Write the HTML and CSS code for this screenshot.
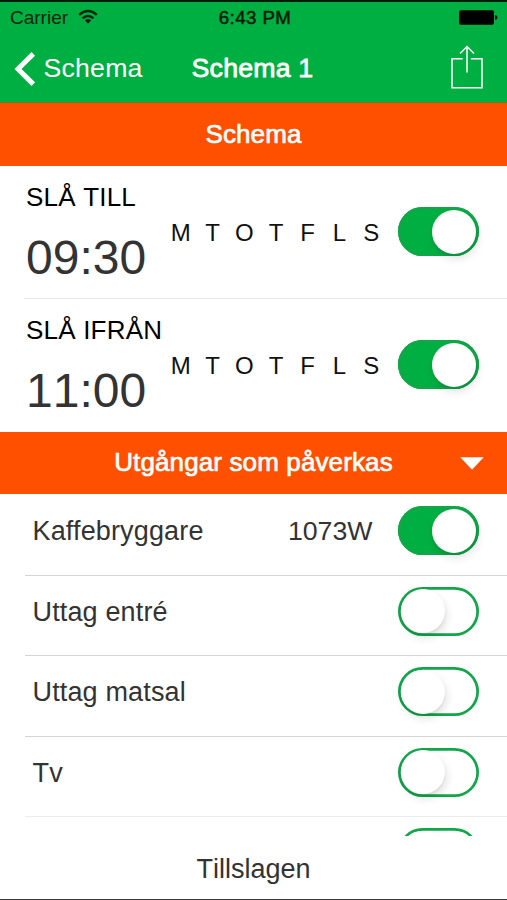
FILE: index.html
```html
<!DOCTYPE html>
<html lang="sv">
<head>
<meta charset="utf-8">
<title>Schema 1</title>
<link rel="stylesheet" href="styles.css">
</head>
<body>
<div class="app">
  <header class="top">
    <div class="status">
      <span class="carrier">Carrier
        <svg class="wifi" width="20" height="16" viewBox="0 0 20 16" fill="none" stroke="#04240e" stroke-width="2.4"><path d="M1.2 5.8Q10 -1.8 18.8 5.8"/><path d="M4.5 9.3Q10 4.6 15.5 9.3"/><path d="M6.8 11.2Q10 8.8 13.2 11.2L10 14.8Z" fill="#04240e" stroke="none"/></svg>
      </span>
      <span class="clock">6:43 PM</span>
      <svg class="battery" width="39" height="15" viewBox="0 0 39 15"><rect x="0" y="0.3" width="35" height="14.4" rx="2"/><path d="M36 5Q38.4 5.2 38.4 7.5T36 10Z"/></svg>
    </div>
    <nav class="nav">
      <a class="back"><svg width="22" height="34" viewBox="0 0 22 34" fill="none" stroke="#fff" stroke-width="5"><path d="M19.3 1.9L4 17L19.3 32.1"/></svg>Schema</a>
      <h1 class="title">Schema 1</h1>
      <svg class="share" width="32" height="44" viewBox="0 0 32 44" fill="none" stroke="#fff" stroke-width="1.5"><path d="M11.7 13.8H1V42.8H31V13.8H19.9"/><path d="M16 27.5V1.8M9 8.5L16 1.5L23 8.5"/></svg>
    </nav>
  </header>
  <h2 class="band">Schema</h2>
  <section class="times">
    <div class="time-row">
      <div class="when"><div class="label">SLÅ TILL</div><div class="hour">09:30</div></div>
      <div class="days"><span>M</span><span>T</span><span>O</span><span>T</span><span>F</span><span>L</span><span>S</span></div>
      <div class="switch on"><i></i></div>
    </div>
    <div class="time-row">
      <div class="when"><div class="label">SLÅ IFRÅN</div><div class="hour">11:00</div></div>
      <div class="days"><span>M</span><span>T</span><span>O</span><span>T</span><span>F</span><span>L</span><span>S</span></div>
      <div class="switch on"><i></i></div>
    </div>
  </section>
  <h2 class="band">Utgångar som påverkas<svg class="caret" width="24" height="13" viewBox="0 0 24 13"><path d="M0.3 0.3H23.7L12 12.7Z" fill="#fff"/></svg></h2>
  <section class="outlets">
    <div class="outlet"><span class="name">Kaffebryggare</span><span class="watt">1073W</span><div class="switch on"><i></i></div></div>
    <div class="outlet"><span class="name">Uttag entré</span><div class="switch"><i></i></div></div>
    <div class="outlet"><span class="name">Uttag matsal</span><div class="switch"><i></i></div></div>
    <div class="outlet last"><span class="name">Tv</span><div class="switch"><i></i></div></div>
    <div class="outlet"><span class="name"></span><div class="switch"><i></i></div></div>
  </section>
  <footer class="footer">Tillslagen</footer>
</div>
</body>
</html>
```
FILE: styles.css
```css
* { box-sizing: border-box; }
body { margin: 0; background: #fff; font-family: "Liberation Sans", Arial, sans-serif; font-kerning: none; }
.app { width: 507px; height: 900px; overflow: hidden; display: flex; flex-direction: column; border-bottom: 1px solid #3c3c3c; }
.app > * { flex-shrink: 0; }
svg { display: block; flex: none; }

.top { height: 103px; background: #00af41; border-top: 2px solid #001b08; border-bottom: 1px solid #667d25; }
.status { height: 32px; padding: 0 9px 0 10px; display: grid; grid-template-columns: 1fr auto 1fr; align-items: center; font-size: 19px; line-height: 32px; color: #04240e; }
.carrier { display: flex; align-items: center; gap: 10px; }
.wifi { margin-top: -3px; }
.clock { margin-right: -2px; font-size: 18.6px; letter-spacing: 0.45px; color: #001b08; -webkit-text-stroke: 0.5px #001b08; }
.battery { justify-self: end; margin-top: -1px; }
.nav { height: 68px; padding: 0 24px 0 14px; display: grid; grid-template-columns: 1fr auto 1fr; align-items: center; color: #fff; font-size: 26.7px; line-height: 69px; }
.back { display: flex; align-items: center; gap: 7.5px; letter-spacing: 0.2px; }
.title { margin: 0 -4px 0 4px; font: inherit; letter-spacing: 0.2px; -webkit-text-stroke: 0.8px #fff; }
.share { justify-self: end; margin-top: -3px; }

.band { margin: 0; height: 62.5px; display: flex; justify-content: center; align-items: center; position: relative; background: #ff5000; color: #fff; font-weight: 400; font-size: 26px; letter-spacing: 0.12px; line-height: 63.5px; -webkit-text-stroke: 0.7px #fff; }
.caret { position: absolute; right: 23px; top: 25.5px; }

.times { height: 266px; }
.time-row { height: 133px; padding-left: 26px; padding-right: 28.5px; display: flex; align-items: center; position: relative; }
.time-row:first-child::after { content: ""; position: absolute; left: 24px; right: 0; bottom: 0; height: 1px; background: #e8e8e8; }
.when { width: 139px; height: 133px; padding-top: 11px; white-space: nowrap; }
.label { font-size: 26px; letter-spacing: 0.2px; line-height: 40px; color: #000; }
.hour { font-size: 48px; line-height: 82px; color: #333; }
.days { width: 222px; display: grid; grid-template-columns: repeat(7, 1fr); text-align: center; font-size: 24px; line-height: 49px; color: #111; }
.time-row .switch { margin-left: auto; margin-top: -1px; }

.switch { flex: none; width: 80.5px; height: 49px; border-radius: 25px; padding: 2.5px; display: flex; background: #fff; box-shadow: inset 0 0 0 2.7px #11a649; }
.switch i { display: block; width: 44px; height: 44px; border-radius: 50%; background: #fff; box-shadow: 2px 5px 9px rgba(0, 0, 0, 0.11), 0 2px 3px rgba(0, 0, 0, 0.07); }
.switch.on { background: #00af41; justify-content: flex-end; }

.outlets { height: 342px; overflow: hidden; padding-top: 0.5px; }
.outlet { height: 80.6px; padding: 11.5px 28.5px 0 32.5px; display: flex; position: relative; font-size: 27px; line-height: 51px; color: #333; }
.outlet::after { content: ""; position: absolute; left: 25px; right: 0; bottom: -0.5px; height: 1px; background: #d4d4d4; }
.outlet.last::after { background: #ececec; }
.name { flex: 1; letter-spacing: 0.15px; font-kerning: normal; }
.watt { font-size: 26.7px; margin-right: 25.5px; }
.footer { flex: 1 0 0; background: #fff; text-align: center; font-size: 27px; line-height: 66px; color: #333; }
```
